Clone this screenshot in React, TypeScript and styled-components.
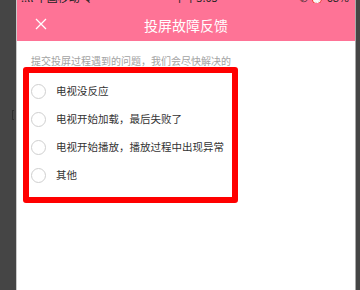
import React from 'react';
import styled, { createGlobalStyle } from 'styled-components';

const GlobalStyle = createGlobalStyle`
  html, body {
    margin: 0;
    padding: 0;
    background: #454545;
  }
  body {
    font-family: "Noto Sans CJK SC", "Liberation Sans", sans-serif;
  }
  * {
    box-sizing: border-box;
  }
`;

const options = ['电视没反应', '电视开始加载，最后失败了', '电视开始播放，播放过程中出现异常', '其他'];

const App: React.FC = () => {
  return (
    <>
      <GlobalStyle />
      <Frame>
        <SideStrip>
          <Bracket />
        </SideStrip>
        <Screen>
          <Header>
            <StatusRow>
              <StatusText>..ll 中国移动 令</StatusText>
              <StatusText>下午3:05</StatusText>
              <StatusText>✆ ⏰ 68%</StatusText>
            </StatusRow>
            <TitleRow>
              <CloseButton>
                <svg width="12" height="12" viewBox="0 0 12 12">
                  <path d="M1 1 L11 11 M11 1 L1 11" stroke="#fff" strokeWidth="1.3" fill="none" />
                </svg>
              </CloseButton>
              <Title>投屏故障反馈</Title>
            </TitleRow>
          </Header>
          <Content>
            <Hint>提交投屏过程遇到的问题，我们会尽快解决的</Hint>
            <OptionBox>
              {options.map((o) => (
                <OptionRow key={o}>
                  <Radio />
                  <OptionLabel>{o}</OptionLabel>
                </OptionRow>
              ))}
            </OptionBox>
          </Content>
        </Screen>
        <RightStrip />
      </Frame>
    </>
  );
};

export default App;

const Frame = styled.div`
  display: flex;
  width: 360px;
  height: 290px;
  overflow: hidden;
`;

const SideStrip = styled.div`
  width: 17px;
  flex-shrink: 0;
  background: #454545;
  border-right: 1px solid #c9c9c9;
  position: relative;
`;

const Bracket = styled.div`
  position: absolute;
  left: 12px;
  top: 110px;
  width: 2px;
  height: 10px;
  border: 1px solid #2e2e2e;
  border-right: none;
`;

const RightStrip = styled.div`
  width: 5px;
  flex-shrink: 0;
  background: #454545;
  border-left: 1px solid #a8a8a8;
`;

const Screen = styled.div`
  flex: 1;
  display: flex;
  flex-direction: column;
  background: #fff;
`;

const Header = styled.div`
  height: 41px;
  background: #fe7396;
  display: flex;
  flex-direction: column;
`;

const StatusRow = styled.div`
  height: 3px;
  overflow: hidden;
  display: flex;
  justify-content: space-between;
  align-items: flex-end;
  padding: 0 6px 0 4px;
`;

const StatusText = styled.span`
  font-size: 11px;
  line-height: 11px;
  color: #222;
  margin-top: -8px;
`;

const TitleRow = styled.div`
  flex: 1;
  display: flex;
  align-items: center;
  justify-content: center;
  position: relative;
`;

const CloseButton = styled.div`
  position: absolute;
  left: 18px;
  top: 15px;
  width: 12px;
  height: 12px;
  display: flex;
`;

const Title = styled.div`
  color: #fff;
  font-size: 14px;
  line-height: 16px;
  margin-top: 5px;
`;

const Content = styled.div`
  display: flex;
  flex-direction: column;
  padding: 14px 0 0 6px;
`;

const Hint = styled.div`
  font-size: 10px;
  line-height: 12px;
  color: #a3a3a3;
  padding-left: 8px;
  height: 12px;
`;

const OptionBox = styled.div`
  width: 215px;
  height: 136px;
  border: 6px solid #ff0000;
  border-radius: 3px;
  padding: 4px 0 0 2px;
  display: flex;
  flex-direction: column;
`;

const OptionRow = styled.div`
  display: flex;
  align-items: center;
  height: 28px;
`;

const Radio = styled.div`
  width: 15px;
  height: 15px;
  border: 1px solid #cfcfcf;
  border-radius: 50%;
  flex-shrink: 0;
`;

const OptionLabel = styled.span`
  font-size: 10.5px;
  line-height: 14px;
  color: #333;
  margin-left: 10px;
  white-space: nowrap;
`;
